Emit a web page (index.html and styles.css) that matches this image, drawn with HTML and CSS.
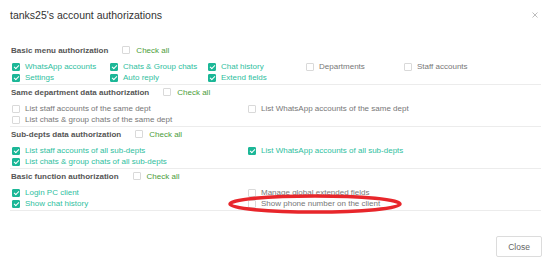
FILE: index.html
```html
<!DOCTYPE html>
<html>
<head>
<meta charset="utf-8">
<link rel="stylesheet" href="styles.css">
</head>
<body>
<div class="dialog">
  <div class="head">
    <span class="title">tanks25's account authorizations</span>
    <svg class="x" width="6" height="6" viewBox="0 0 6 6"><path d="M0.5 0.5L5.5 5.5M5.5 0.5L0.5 5.5" stroke="#b5b5b5" stroke-width="0.9"/></svg>
  </div>
  <div class="body">
    <section class="sec">
      <div class="sec-head"><span class="sec-title">Basic menu authorization</span><label class="cb all"><i class="box"></i>Check all</label></div>
      <div class="grid five">
        <label class="cb on"><i class="box"></i>WhatsApp accounts</label>
        <label class="cb on"><i class="box"></i>Chats &amp; Group chats</label>
        <label class="cb on"><i class="box"></i>Chat history</label>
        <label class="cb"><i class="box"></i>Departments</label>
        <label class="cb"><i class="box"></i>Staff accounts</label>
        <label class="cb on"><i class="box"></i>Settings</label>
        <label class="cb on"><i class="box"></i>Auto reply</label>
        <label class="cb on"><i class="box"></i>Extend fields</label>
      </div>
    </section>
    <section class="sec">
      <div class="sec-head"><span class="sec-title">Same department data authorization</span><label class="cb all"><i class="box"></i>Check all</label></div>
      <div class="grid two">
        <label class="cb"><i class="box"></i>List staff accounts of the same dept</label>
        <label class="cb"><i class="box"></i>List WhatsApp accounts of the same dept</label>
        <label class="cb"><i class="box"></i>List chats &amp; group chats of the same dept</label>
      </div>
    </section>
    <section class="sec">
      <div class="sec-head"><span class="sec-title">Sub-depts data authorization</span><label class="cb all"><i class="box"></i>Check all</label></div>
      <div class="grid two">
        <label class="cb on"><i class="box"></i>List staff accounts of all sub-depts</label>
        <label class="cb on"><i class="box"></i>List WhatsApp accounts of all sub-depts</label>
        <label class="cb on"><i class="box"></i>List chats &amp; group chats of all sub-depts</label>
      </div>
    </section>
    <section class="sec">
      <div class="sec-head"><span class="sec-title">Basic function authorization</span><label class="cb all"><i class="box"></i>Check all</label></div>
      <div class="grid two">
        <label class="cb on"><i class="box"></i>Login PC client</label>
        <label class="cb"><i class="box"></i>Manage global extended fields</label>
        <label class="cb on"><i class="box"></i>Show chat history</label>
        <label class="cb"><i class="box"></i>Show phone number on the client</label>
      </div>
    </section>
  </div>
  <div class="foot"><button class="btn">Close</button></div>
  <svg class="mark" width="180" height="24" viewBox="0 0 180 24"><ellipse cx="90" cy="12" rx="85" ry="8" fill="none" stroke="#e8262b" stroke-width="3.5"/></svg>
</div>
</body>
</html>
```

FILE: styles.css
```css
* { box-sizing: border-box; }
html, body { margin: 0; padding: 0; background: #fff; }
body { font-family: "Liberation Sans", Arial, sans-serif; }
.dialog { position: relative; width: 554px; height: 263px; padding: 0 13px 0 10px; }
.head { height: 43px; padding-top: 8px; display: flex; justify-content: space-between; align-items: flex-start; }
.title { font-size: 10.5px; line-height: 14px; color: #333; }
.x { margin-top: 4px; margin-right: 3px; }
.sec { border-bottom: 1px solid #ececec; padding-bottom: 1px; }
.sec-head { display: flex; align-items: center; height: 14px; padding-left: 1px; margin-bottom: 4px; }
.sec-title { font-size: 8px; font-weight: bold; color: #555; margin-right: 14px; }
.grid { display: grid; padding-left: 2px; }
.five { grid-template-columns: repeat(5, 98px); }
.two { grid-template-columns: 236px 236px; }
.cb { display: flex; align-items: center; height: 11px; font-size: 8px; color: #777; white-space: nowrap; }
.cb .box { position: relative; width: 8px; height: 8px; border: 1px solid #d9d9d9; border-radius: 1px; margin-right: 5px; flex: none; background: #fff; }
.cb.on { color: #2fc0a0; }
.cb.on .box { background: #1cb797; border-color: #1cb797; }
.cb.on .box::after { content: ""; position: absolute; left: 2px; top: 0.5px; width: 2px; height: 4px; border-right: 1px solid #fff; border-bottom: 1px solid #fff; transform: rotate(45deg); }
.cb.all { color: #4b9c3a; height: 14px; }
.cb.all .box { margin-right: 6px; }
.foot { display: flex; justify-content: flex-end; margin-top: 25px; padding-right: -1px; }
.btn { width: 46px; height: 21px; border: 1px solid #dcdcdc; border-radius: 2px; background: #fff; font-family: "Liberation Sans", Arial, sans-serif; font-size: 8.5px; color: #666; padding: 0; margin-right: -1px; }
.mark { position: absolute; left: 225px; top: 192px; }
```
